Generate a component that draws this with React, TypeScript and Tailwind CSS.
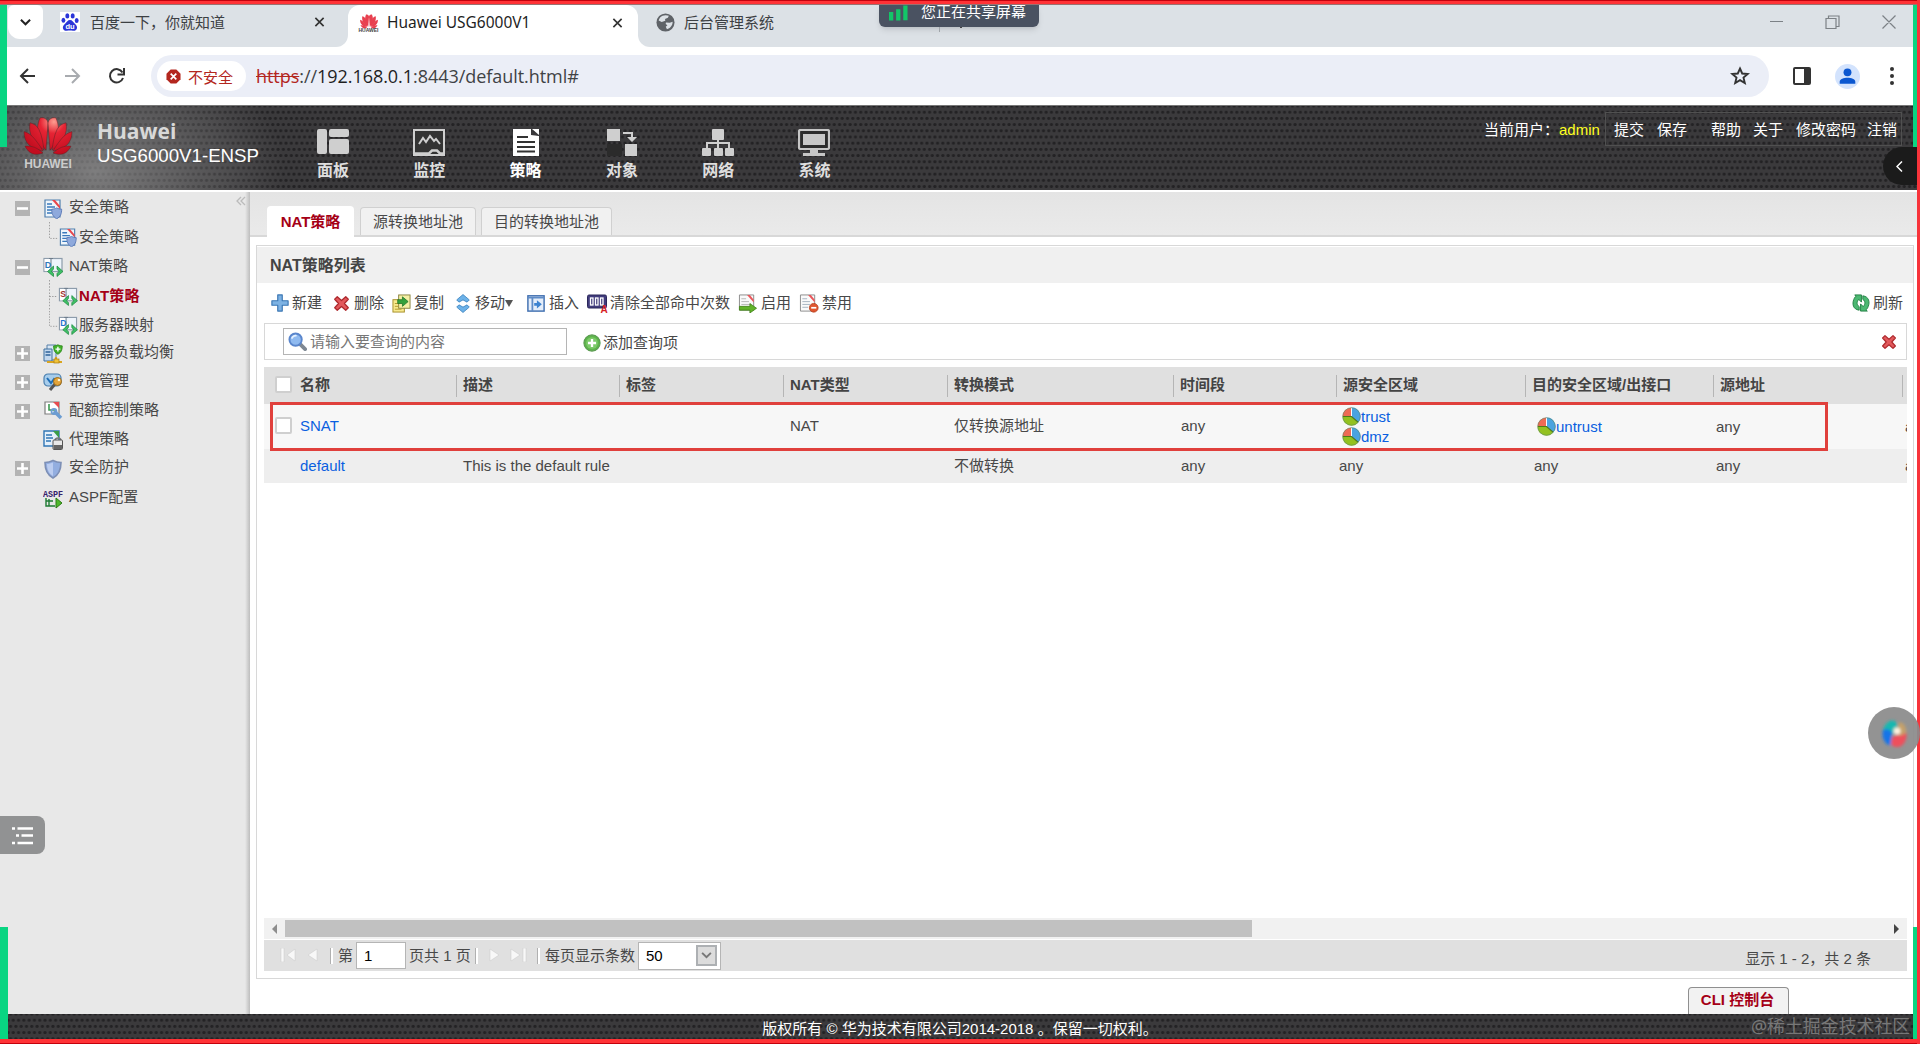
import React from "react";

type IconProps = { className?: string };

/* ---------- logos ---------- */

function Petals() {
  return (
    <>
      <path d="M24 37C18 30 12 18 18 4c5-1 8 2 8 6z" transform="translate(-1 0)" />
      <path d="M26 37c6-7 12-19 6-33-5-1-8 2-8 6z" transform="translate(1 0)" />
      <path d="M21 37C10 30 5 20 7 9c4 1 7 3 9 7 3 6 4 14 5 21z" />
      <path d="M29 37c11-7 16-17 14-28-4 1-7 3-9 7-3 6-4 14-5 21z" />
      <path d="M20 38C8 36 1 30 1 18c4 1 8 4 11 8 3 4 6 8 8 12z" />
      <path d="M30 38c12-2 19-8 19-20-4 1-8 4-11 8-3 4-6 8-8 12z" />
      <path d="M20 40C12 43 6 41 2 33c7-1 13 2 18 7z" />
      <path d="M30 40c8 3 14 1 18-7-7-1-13 2-18 7z" />
    </>
  );
}

function HuaweiLogo({ className }: IconProps) {
  return (
    <svg viewBox="0 0 50 43" className={className} preserveAspectRatio="none">
      <defs>
        <radialGradient id="petal" gradientUnits="userSpaceOnUse" cx="30" cy="8" r="34">
          <stop offset="0" stopColor="#ff9d90" />
          <stop offset="0.35" stopColor="#e62434" />
          <stop offset="1" stopColor="#c20d1f" />
        </radialGradient>
      </defs>
      <g fill="url(#petal)" stroke="#5a2024" strokeWidth="0.5"><Petals /></g>
    </svg>
  );
}

function HuaweiFavicon() {
  return (
    <div className="flex w-[21px] shrink-0 flex-col items-center">
      <svg viewBox="0 0 50 43" className="h-[16px] w-[20px]" fill="#e8404f"><Petals /></svg>
      <span className="-mt-px font-['Liberation_Sans'] text-[5px] leading-[5px] font-bold text-[#444]">HUAWEI</span>
    </div>
  );
}

function BaiduIcon() {
  return (
    <svg viewBox="0 0 20 20" className="h-5 w-5 shrink-0 bg-white">
      <g fill="#2b35d8">
        <ellipse cx="7.3" cy="3.9" rx="2" ry="2.7" />
        <ellipse cx="12.7" cy="3.9" rx="2" ry="2.7" />
        <ellipse cx="3.4" cy="8.2" rx="1.9" ry="2.5" />
        <ellipse cx="16.7" cy="8.4" rx="1.9" ry="2.5" />
        <path d="M10 8c2.4 0 3 2 4.600 3.600 2 1.800 2.800 3 2.300 5-.6 2.200-2.400 2.400-4 2.200-2-.3-4-.3-6 0-1.600.2-3.400-.2-3.900-2.200-.5-2 .4-3.200 2.300-5C7 10 7.600 8 10 8z" />
      </g>
      <text x="10" y="17" textAnchor="middle" fontSize="7.500" fontWeight="700" fill="#fff" fontFamily="Liberation Sans">du</text>
    </svg>
  );
}

function Globe() {
  return (
    <svg viewBox="0 0 20 20" className="h-[19px] w-[19px] shrink-0">
      <circle cx="10" cy="10" r="9.500" fill="#5f6368" />
      <path d="M7 2.800c2-.8 5-.7 6.500.2l-1 2-3 1.200.3 2L6 9.500 2.800 8C3.300 5.500 5 3.600 7 2.800zM10.500 10l4 .2 3-1c0 4-2.500 7-6 7.900l-1.200-2.500 1.700-1.800-1.800-1.300z" fill="#dce1e6" />
    </svg>
  );
}

/* ---------- main navigation icons ---------- */

const NAV_ICONS: Record<string, React.ReactNode> = {
  面板: (
    <g fill="#cfcfcf">
      <rect x="0" y="0" width="10" height="25" rx="2" />
      <rect x="12" y="0" width="20" height="8" rx="2" />
      <rect x="12" y="10" width="20" height="15" rx="2" />
    </g>
  ),
  监控: (
    <g fill="none" stroke="#cfcfcf">
      <rect x="1" y="1" width="30" height="25" fill="#333" strokeWidth="2" />
      <path d="M6 15l4-6 3 4 4-6 4 5 2-2 4 5" strokeWidth="2" />
      <path d="M1 24.500h15l3-3h5l3 3h5" strokeWidth="2.500" />
    </g>
  ),
  策略: (
    <g>
      <path d="M3 0h18v6l8 1v20H3z" fill="#fff" />
      <path d="M22 0h7v6z" fill="#fff" />
      <path d="M7 8h11M7 13h18M7 18h18M7 22.500h18" stroke="#333" strokeWidth="1.800" />
    </g>
  ),
  对象: (
    <g fill="#cfcfcf">
      <rect x="1" y="0" width="13" height="12" />
      <rect x="19" y="15" width="12" height="12" />
      <path d="M17 3h10v5h4l-5 5-5-5h4V5h-8z" />
      <rect x="1" y="15" width="15" height="12" fill="#2b2b2b" />
    </g>
  ),
  网络: (
    <g fill="#cfcfcf">
      <rect x="10" y="0" width="12" height="11" rx="1" />
      <rect x="0" y="19" width="9" height="8" rx="1" />
      <rect x="12" y="19" width="9" height="8" rx="1" />
      <rect x="23" y="19" width="9" height="8" rx="1" />
      <path d="M16 10v9M5 20v-6h22v6" fill="none" stroke="#cfcfcf" strokeWidth="2" />
    </g>
  ),
  系统: (
    <g fill="#c6c6c6">
      <rect x="1" y="1" width="30" height="19" rx="1.500" fill="#2b2b2b" stroke="#c6c6c6" strokeWidth="2.200" />
      <rect x="5" y="5" width="22" height="11" />
      <path d="M12 21h8v3h7v3H5v-3h7z" />
    </g>
  ),
};

/* ---------- small coloured icons ---------- */

function Ico({ children, className = "h-[19px] w-[19px]" }: { children: React.ReactNode; className?: string }) {
  return <svg viewBox="0 0 20 20" className={`shrink-0 ${className}`}>{children}</svg>;
}

const shieldPath = "M10 1.500c3 1.500 5.500 2 8 2 0 7-1.500 12-8 15.500C3.500 15.500 2 10.500 2 3.500c2.500 0 5-.5 8-2z";

const policyArt = (
  <>
    <path d="M2 1h15v17H2z" fill="#eef5fb" stroke="#4f7fae" strokeWidth="1.200" />
    <path d="M9 1h3l5 6v3z" fill="#e8464b" />
    <path d="M4 5h5M4 8h8M4 11h6M4 14h5" stroke="#3a79bd" strokeWidth="1.400" />
    <g transform="translate(7.500 8) scale(.62)"><path d={shieldPath} fill="#8ea9dc" stroke="#5a77b5" strokeWidth="1.500" /></g>
  </>
);

const natArt = (letter: string, color: string) => (
  <>
    <rect x="1" y="1.500" width="18" height="13" fill="#eef4fb" stroke="#8d9cab" strokeWidth="1.200" />
    <rect x="1.600" y="2.100" width="5.500" height="12" fill="#fff" />
    <path d="M8 1v14M6 1.500h4" stroke="#6d7c8b" />
    <text x="1.800" y="10.500" fontSize="9" fontWeight="700" fill={color} fontFamily="Liberation Sans">{letter}</text>
    <path d="M10.500 9L4.500 14.500l6 5V16.500L8.500 14.500l2-2.500zM14 9l6 5.500-6 5V16.500l2-2-2-2.500z" fill="#3fbf66" stroke="#16873a" strokeWidth=".7" />
  </>
);

const ART: Record<string, React.ReactNode> = {
  policy: policyArt,
  nat: natArt("D", "#2d77b8"),
  snat: natArt("S", "#a03030"),
  dnat: natArt("D", "#1f73d0"),
  slb: (
    <>
      <path d="M4 1h9v15H4z" fill="#d8e6f4" stroke="#5880a8" />
      <path d="M1 5h8v12H1z" fill="#c3d8ee" stroke="#40709f" />
      <path d="M2.500 8h5M2.500 11h5" stroke="#2f6299" strokeWidth="1.300" />
      <g transform="translate(9.500 0) scale(.54)"><path d={shieldPath} fill="#43b32c" stroke="#2a8518" strokeWidth="1.500" /><path d="M10 5v9M5.500 9.500h9" stroke="#fff" strokeWidth="2.500" /></g>
      <path d="M4 18h15M13 13v5" stroke="#d9a520" strokeWidth="2.200" />
      <rect x="11" y="15" width="5" height="4" fill="#f0c238" stroke="#a97d10" strokeWidth=".7" />
    </>
  ),
  bandwidth: (
    <>
      <rect x="1" y="2" width="17" height="12" rx="4" fill="#a7cdec" stroke="#4b7fae" strokeWidth="1.200" />
      <path d="M4 6l4 5 3-4 3 3" stroke="#1e6db5" strokeWidth="2" fill="none" />
      <path d="M7 18l5-6" stroke="#555" strokeWidth="3" />
      <circle cx="14.500" cy="9.500" r="4" fill="#e3a43a" stroke="#9b6916" />
      <circle cx="16" cy="8" r="1.300" fill="#fff4d0" />
    </>
  ),
  quota: (
    <>
      <path d="M2 1h14v12H2z" fill="#fff" stroke="#7e7e7e" strokeWidth="1.200" />
      <path d="M10 1h6v6z" fill="#e84c51" />
      <path d="M6 3v6h6" stroke="#3c9a50" strokeWidth="1.600" fill="none" />
      <path d="M11 10l7 7" stroke="#6c9dd2" strokeWidth="3.500" />
      <circle cx="11" cy="10.500" r="2.500" fill="none" stroke="#6c9dd2" strokeWidth="1.800" />
    </>
  ),
  proxy: (
    <>
      <path d="M1 1h15v15H1z" fill="#e4f0fb" stroke="#2f75b5" strokeWidth="1.400" />
      <path d="M10 1h6v7z" fill="#3a9d48" />
      <path d="M3 5h6M3 8h7M3 11h5" stroke="#2f75b5" strokeWidth="1.500" />
      <path d="M12 11a3 3 0 016 0" stroke="#777" strokeWidth="1.500" fill="none" />
      <rect x="10" y="10" width="9.500" height="9.500" rx="1" fill="#e8e8e8" stroke="#555" />
      <rect x="10.500" y="15" width="8.500" height="4" fill="#666" />
    </>
  ),
  shield: (
    <>
      <path d={shieldPath} fill="#93aee0" stroke="#7d8fb5" strokeWidth="1.600" />
      <path d="M10 3.500v13.500c-4-2.500-6-6-6-12 2 0 4-.6 6-1.500z" fill="#bccdf0" />
    </>
  ),
  aspf: (
    <>
      <text x="0" y="7.500" textLength="20" lengthAdjust="spacingAndGlyphs" fontSize="9.500" fontWeight="700" fill="#35206b" fontFamily="Liberation Mono">ASPF</text>
      <path d="M3 9v8h9M3 12h7M6 10v7" stroke="#1d7a32" strokeWidth="1.400" fill="none" />
      <path d="M13 9l6 5-6 5z" fill="#4fb82c" stroke="#2c7a14" />
    </>
  ),
  add: <path d="M7.500 1h5v6.500H19v5h-6.500V19h-5v-6.500H1v-5h6.500z" fill="#7db2e3" stroke="#3b77b4" strokeWidth="1.300" strokeLinejoin="round" />,
  del: <path d="M2 5l3-3 5 4.500L15 2l3 3-4.500 5 4.500 5-3 3-5-4.500L5 18l-3-3 4.500-5z" fill="#e2595c" stroke="#ae2a2e" strokeWidth="1.500" strokeLinejoin="round" />,
  copy: (
    <>
      <rect x="1" y="6" width="12" height="13" fill="#f7e98e" stroke="#a58d27" />
      <rect x="7" y="1" width="12" height="14" fill="#f5f0a5" stroke="#8a8440" />
      <path d="M3 10h4M3 13h4M3 16h7" stroke="#b39a2e" />
      <path d="M6 6h5V3l6 5-6 5v-3H6z" fill="#35a13c" stroke="#1e7326" strokeWidth=".8" />
    </>
  ),
  move: (
    <g fill="#6db2e8" stroke="#2d78b8" strokeWidth=".8">
      <path d="M10 0l7 6-2.500 2.500L10 6 5.500 8.500 3 6z" />
      <path d="M10 20l7-6-2.500-2.500L10 14l-4.500-2.500L3 14z" />
    </g>
  ),
  insert: (
    <>
      <rect x="1" y="2" width="18" height="17" fill="#e5eefa" stroke="#406fb0" strokeWidth="1.600" />
      <path d="M1 4h18M6 4v15" stroke="#5f8cc7" strokeWidth="2" />
      <path d="M8 10h3V7l5.500 4.500L11 16v-3H8z" fill="#3d83d0" />
    </>
  ),
  clear: (
    <>
      <rect x="0" y="2" width="19" height="13" rx="1.500" fill="#413c7c" stroke="#2b275a" />
      <g fill="none" stroke="#fff" strokeWidth="1.300"><rect x="3" y="5" width="2.500" height="7" /><rect x="8" y="5" width="2.500" height="7" /><rect x="13" y="5" width="2.500" height="7" /></g>
      <text x="13" y="20" fontSize="10" fontWeight="700" fill="#d61f26" fontFamily="Liberation Sans">A</text>
    </>
  ),
  enable: (
    <>
      <path d="M1 1h15v16H1z" fill="#fafafa" stroke="#8a8a8a" />
      <path d="M9 1h3l4 5v3z" fill="#e9565a" />
      <path d="M3 5h5M3 8h8M3 11h10" stroke="#b5b5b5" />
      <path d="M1 13h11v-3l7 5-7 5v-3H1z" fill="#62b32a" stroke="#3b7d12" strokeWidth=".8" />
    </>
  ),
  disable: (
    <>
      <path d="M1 1h15v17H1z" fill="#fafafa" stroke="#8a8a8a" />
      <path d="M9 1h3l4 5v3z" fill="#e9565a" />
      <path d="M3 5h5M3 8h8M3 11h8M3 14h6" stroke="#a5b2c0" />
      <circle cx="15" cy="14.500" r="4.600" fill="#e0562f" stroke="#b23a18" strokeWidth=".8" />
      <path d="M12.300 14.500h5.400" stroke="#fff" strokeWidth="1.800" />
    </>
  ),
  refresh: (
    <g fill="#4cb872" stroke="#1d7d40" strokeWidth="1">
      <path d="M8 18C1 17 0 11 2 6c.8-2 1.500-3 2.500-3.500L3 1h7.500v8L7.500 6C5 9 5 12 8 14z" />
      <path d="M12 2c7 1 8 7 6 12-.8 2-1.500 3-2.500 3.500L17 19H9.500v-8l3 3C15 11 15 8 12 6z" />
    </g>
  ),
  search: (
    <>
      <path d="M12.500 12.500l5.500 5.500" stroke="#7e8893" strokeWidth="4" strokeLinecap="round" />
      <circle cx="8" cy="8" r="6.500" fill="#8fbaf0" stroke="#5a86cc" strokeWidth="2" />
      <path d="M4 7a4 4 0 015-3" stroke="#e5f1ff" strokeWidth="2" fill="none" />
    </>
  ),
  plusCircle: (
    <>
      <circle cx="10" cy="10" r="9" fill="#5eb54b" stroke="#5a9a50" strokeWidth="1.200" />
      <circle cx="10" cy="10" r="6.500" fill="#7dca6a" />
      <path d="M10 5.500v9M5.500 10h9" stroke="#fff" strokeWidth="2.600" />
    </>
  ),
  zone: (
    <>
      <path d="M10 10V.5A9.500 9.500 0 00.5 10z" fill="#ee6a55" />
      <path d="M10 10V.5A9.500 9.500 0 0117 16.500z" fill="#4ba3df" />
      <path d="M10 10H.5A9.500 9.500 0 0017 16.500z" fill="#93c11f" />
      <path d="M10 1v9" stroke="#fff" strokeWidth="1" fill="none" />
      <path d="M1 10h9l7 6" stroke="#4d7a18" strokeWidth="1.200" fill="none" />
      <circle cx="10" cy="10" r="9.200" fill="none" stroke="#5c8a6a" strokeOpacity=".6" />
    </>
  ),
};

/* ---------- browser chrome ---------- */

function Cross({ className = "" }: IconProps) {
  return (
    <svg viewBox="0 0 12 12" className={`h-[12px] w-[11px] shrink-0 ${className}`}>
      <path d="M1.500 1.500l9 9M10.500 1.500l-9 9" stroke="#333" strokeWidth="1.800" />
    </svg>
  );
}

function TabStrip() {
  return (
    <div className="flex h-[42px] shrink-0 bg-[#dce1e6] pl-2 text-[15px] text-[#3c4043]">
      <div className="flex h-[34px] w-[35px] shrink-0 items-center justify-center rounded-b-xl rounded-t-md bg-white">
        <svg viewBox="0 0 12 8" className="h-[8px] w-[11px]"><path d="M1 1.500l5 5 5-5" fill="none" stroke="#222" strokeWidth="2.200" /></svg>
      </div>
      <div className="flex h-full w-[305px] shrink-0 bg-white">
        <div className="flex h-full w-full items-center rounded-br-xl bg-[#dce1e6] pb-[8px] pl-[17px]">
          <BaiduIcon />
          <span className="ml-[10px] w-[224px]">百度一下，你就知道</span>
          <Cross />
        </div>
      </div>
      <div className="flex h-full w-[290px] shrink-0 items-center bg-[#dce1e6]">
        <div className="flex h-full w-full items-center rounded-t-xl bg-white pb-[7px] pl-[10px] text-[#1f1f1f]">
          <HuaweiFavicon />
          <span className="ml-[8px] w-[225px] text-[15.500px]">Huawei USG6000V1</span>
          <Cross />
        </div>
      </div>
      <div className="flex h-full w-[1282px] shrink-0 bg-white">
        <div className="flex h-full w-full items-center rounded-bl-xl bg-[#dce1e6] pb-[8px] pl-[18px]">
          <Globe />
          <span className="ml-[9px]">后台管理系统</span>
          <svg viewBox="0 0 130 14" className="mr-[22px] ml-auto h-[14px] w-[130px]" fill="none" stroke="#7c8186" strokeWidth="1.200">
            <path d="M2 6.500h13M58 3.500h10v10H58zM60.500 3V1H71v10.500h-2.500M114.500.5l13 13M127.500.5l-13 13" />
          </svg>
        </div>
      </div>
    </div>
  );
}

function AddressBar() {
  return (
    <div className="flex h-[58px] shrink-0 items-center bg-white">
      <svg viewBox="0 0 110 20" className="ml-[18px] h-[20px] w-[110px] shrink-0" fill="none" strokeWidth="2">
        <path d="M17 10H3M10 3l-7 7 7 7" stroke="#333" />
        <path d="M47 10h14M54 3l7 7-7 7" stroke="#a8abaf" />
        <path d="M104.500 6.500A6.700 6.700 0 10105 12" stroke="#333" />
        <path d="M106 2v6.500h-6.500" stroke="#333" />
      </svg>
      <div className="ml-[23px] flex h-[42px] w-[1618px] shrink-0 items-center rounded-full bg-[#ebeef7] pl-[6px]">
        <div className="flex h-[30px] w-[89px] shrink-0 items-center rounded-full bg-white pl-[9px]">
          <svg viewBox="0 0 16 16" className="h-[15px] w-[15px]"><path d="M5 .5h6L15.500 5v6L11 15.500H5L.5 11V5z" fill="#b3261e" /><path d="M5 5l6 6M11 5l-6 6" stroke="#fff" strokeWidth="1.800" /></svg>
          <span className="mt-[2px] ml-[7px] text-[15px] text-[#b3261e]">不安全</span>
        </div>
        <div className="ml-[10px] w-[1474px] shrink-0 font-['Open_Sans','Noto_Sans_CJK_SC',sans-serif] text-[18px] tracking-[-0.050px] whitespace-nowrap text-[#3f4245]">
          <span className="text-[#b3261e] line-through">https</span>://<span className="text-[#1f1f1f]">192.168.0.1</span>:8443/default.html#
        </div>
        <svg viewBox="0 0 20 20" className="h-[20px] w-[20px] shrink-0"><path d="M10 2.500l2.200 5 5.500.5-4.200 3.600 1.300 5.400-4.800-2.900L5.200 17l1.300-5.400L2.300 8l5.500-.5z" fill="none" stroke="#333" strokeWidth="1.900" /></svg>
      </div>
      <svg viewBox="0 0 18 18" className="ml-[24px] h-[18px] w-[18px] shrink-0"><rect x="1" y="1" width="16" height="16" rx="1" fill="none" stroke="#333" strokeWidth="2" /><path d="M11 1h6v16h-6z" fill="#333" /></svg>
      <svg viewBox="0 0 24 24" className="ml-[24px] h-[25px] w-[25px] shrink-0"><circle cx="12" cy="12" r="12" fill="#d3e3fd" /><circle cx="12" cy="8" r="3.800" fill="#0b57d0" /><path d="M4.500 19v-2c0-2.500 4-3.800 7.500-3.800s7.500 1.300 7.500 3.800v2z" fill="#0b57d0" /></svg>
      <svg viewBox="0 0 6 20" className="ml-[29px] h-[20px] w-[6px] shrink-0" fill="#333"><circle cx="3" cy="3" r="2" /><circle cx="3" cy="10" r="2" /><circle cx="3" cy="17" r="2" /></svg>
    </div>
  );
}

/* ---------- product header ---------- */

const MESH =
  "bg-[#3b3a3c] [background-image:radial-gradient(circle,#232224_1.2px,transparent_1.900px),radial-gradient(circle,#232224_1.2px,transparent_1.900px)] [background-size:5.300px_12.400px] [background-position:0_0,2.650px_6.200px]";

function AppHeader() {
  return (
    <header className={`h-[85px] shrink-0 border-t border-[#777] font-['Liberation_Sans','Noto_Sans_CJK_SC',sans-serif] ${MESH}`}>
      <div className="flex h-full bg-[radial-gradient(ellipse_190px_130px_at_95px_65px,rgba(170,170,170,0.6),transparent)]">
        <div className="ml-[22px] flex w-[52px] flex-col items-center pt-[8px]">
          <HuaweiLogo className="h-[42px] w-[50px]" />
          <span className="mt-[2px] text-[12px] leading-[12px] font-bold tracking-[-0.1px] text-[#ccc]">HUAWEI</span>
        </div>
        <div className="ml-[23px] w-[220px] pt-[13px] whitespace-nowrap">
          <div className="font-['Open_Sans',sans-serif] text-[21px] leading-[24px] font-bold text-[#d8d8d8]">Huawei</div>
          <div className="mt-px text-[18.700px] leading-[24px] text-white">USG6000V1-ENSP</div>
        </div>
        <nav className="flex gap-[64.300px]">
          {Object.entries(NAV_ICONS).map(([label, art]) => (
            <div key={label} className="flex w-[32px] flex-col items-center pt-[23px]">
              <svg viewBox="0 0 32 27" className="h-[27px] w-[32px] shrink-0">{art}</svg>
              <span className={`mt-[5px] text-[16px] leading-[20px] font-bold whitespace-nowrap ${label === "策略" ? "text-white" : "text-[#dedede]"}`}>{label}</span>
            </div>
          ))}
        </nav>
        <div className="mt-[6px] ml-auto flex h-[34px] items-center text-[15px] whitespace-nowrap text-white">
          <span className="mt-[2px] w-[75px]">当前用户：</span>
          <span className="mt-[2px] w-[46px] text-[#ffff20]">admin</span>
          <div className="flex h-full items-center border border-[#505050] pt-[2px] pl-[8px]">
            <span className="w-[43px]">提交</span>
            <span className="w-[54px]">保存</span>
            <span className="w-[42px]">帮助</span>
            <span className="w-[43px]">关于</span>
            <span className="w-[71px]">修改密码</span>
            <span className="w-[34px]">注销</span>
          </div>
          <div className="w-[18px]" />
        </div>
      </div>
    </header>
  );
}

/* ---------- navigation tree ---------- */

type Node = { label: string; icon: string; h: string; toggle?: "+" | "-"; child?: "mid" | "last"; active?: boolean };

const TREE: Node[] = [
  { label: "安全策略", icon: "policy", h: "h-[30px]", toggle: "-" },
  { label: "安全策略", icon: "policy", h: "h-[29px]", child: "last" },
  { label: "NAT策略", icon: "nat", h: "h-[29px]", toggle: "-" },
  { label: "NAT策略", icon: "snat", h: "h-[31px]", child: "mid", active: true },
  { label: "服务器映射", icon: "dnat", h: "h-[27px]", child: "last" },
  { label: "服务器负载均衡", icon: "slb", h: "h-[28px]", toggle: "+" },
  { label: "带宽管理", icon: "bandwidth", h: "h-[29px]", toggle: "+" },
  { label: "配额控制策略", icon: "quota", h: "h-[29px]", toggle: "+" },
  { label: "代理策略", icon: "proxy", h: "h-[29px]" },
  { label: "安全防护", icon: "shield", h: "h-[28px]", toggle: "+" },
  { label: "ASPF配置", icon: "aspf", h: "h-[32px]" },
];

function Sidebar() {
  return (
    <aside className="flex w-[250px] shrink-0 bg-[#e8e8e8]">
      <div className="w-[230px]">
        {TREE.map((n, i) => (
          <div key={i} className={`flex items-center ${n.h}`}>
            <div className="flex w-[43px] shrink-0 pl-[15px]">
              {n.toggle && (
                <div className="mt-[3px] flex h-[15px] w-[15px] items-center justify-center bg-[#b3b3b3]">
                  <svg viewBox="0 0 11 11" className="h-[11px] w-[11px]"><path d={n.toggle === "+" ? "M0 5.500h11M5.500 0v11" : "M0 5.500h11"} stroke="#fff" strokeWidth="2.600" /></svg>
                </div>
              )}
            </div>
            {n.child && (
              <div className="flex w-[15px] shrink-0 self-stretch pl-[6px]">
                <svg viewBox="0 0 10 30" preserveAspectRatio="none" className="h-full w-[9px]"><path d={n.child === "mid" ? "M.5 0v30M.5 16h9" : "M.5 0v17h9"} fill="none" stroke="#999" strokeDasharray="1.500 1.500" /></svg>
              </div>
            )}
            <Ico className={n.child ? "mt-[2px] h-[19px] w-[20px]" : "mt-[3px] h-[20px] w-[20px]"}>{ART[n.icon]}</Ico>
            <span className={`${n.child ? "ml-px" : "ml-[6px]"} leading-[20px] whitespace-nowrap ${n.active ? "font-bold tracking-[0.2px] text-[#a50016]" : ""}`}>{n.label}</span>
          </div>
        ))}
      </div>
      <div className="w-[10px] pt-[4px]">
        <svg viewBox="0 0 10 10" className="ml-[6px] h-[10px] w-[10px] max-w-none" fill="none" stroke="#bbb" strokeWidth="1.300"><path d="M5 1L1 5l4 4M9 1L5 5l4 4" /></svg>
      </div>
      <div className="w-[10px] bg-linear-to-r from-[#bdbdbd]/0 from-50% to-[#bdbdbd]" />
    </aside>
  );
}

/* ---------- content ---------- */

const TOOLS = [
  { label: "新建", icon: "add", box: "w-[62px]", art: "mr-[3px] w-[18px] h-[18px]" },
  { label: "删除", icon: "del", box: "w-[59px]", art: "mr-[4px] w-[17px] h-[17px]" },
  { label: "复制", icon: "copy", box: "w-[62px]", art: "mr-[3px] w-[19px] h-[19px]" },
  { label: "移动", icon: "move", box: "w-[73px]", art: "mr-[3px] w-[18px] h-[19px]", caret: true },
  { label: "插入", icon: "insert", box: "w-[60px]", art: "mr-[4px] w-[18px] h-[18px]" },
  { label: "清除全部命中次数", icon: "clear", box: "w-[151px]", art: "mr-[2px] w-[21px] h-[20px]" },
  { label: "启用", icon: "enable", box: "w-[61px]", art: "mr-[3px] w-[20px] h-[19px]" },
  { label: "禁用", icon: "disable", box: "w-[60px]", art: "mr-[3px] w-[20px] h-[19px]" },
];

const COLS = "grid grid-cols-[30px_163px_163px_164px_164px_226px_163px_189px_188px_189px_4px] overflow-hidden";
const HEADS = ["名称", "描述", "标签", "NAT类型", "转换模式", "时间段", "源安全区域", "目的安全区域/出接口", "源地址"];

function Box() {
  return <div className="h-[17px] w-[17px] rounded-[2px] border-2 border-[#cfcfcf] bg-white" />;
}

function Zone({ name }: { name: string }) {
  return (
    <div className="flex h-[20px] items-center text-[#0a5fe0]">
      <Ico className="h-[19px] w-[19px]">{ART.zone}</Ico>
      <span>{name}</span>
    </div>
  );
}

function Table() {
  return (
    <div className="relative">
      <div className={`${COLS} h-[37px] items-center bg-[#e0e0e0] font-bold text-[#444]`}>
        <div className="-mt-[3px] pl-[11px]"><Box /></div>
        {HEADS.map((h) => (
          <div key={h} className="flex h-[22px] items-center border-r border-[#b5b5b5] pb-[2px] pl-[6px] whitespace-nowrap">
            {h}
          </div>
        ))}
      </div>
      <div className={`${COLS} h-[45px] items-center bg-[#f7f7f7]`}>
        <div className="-mt-[3px] pl-[11px]"><Box /></div>
        <div className="-mt-[2px] pl-[6px] text-[#0a5fe0]">SNAT</div>
        <div />
        <div />
        <div className="-mt-[2px] pl-[6px]">NAT</div>
        <div className="-mt-[2px] pl-[6px]">仅转换源地址</div>
        <div className="-mt-[2px] pl-[7px]">any</div>
        <div className="pl-[5px]"><Zone name="trust" /><Zone name="dmz" /></div>
        <div className="pl-[11px]"><Zone name="untrust" /></div>
        <div className="pl-[2px]">any</div>
        <div className="pl-[2px]">a</div>
      </div>
      <div className={`${COLS} h-[34px] items-center bg-[#eee]`}>
        <div />
        <div className="pl-[6px] text-[#0a5fe0]">default</div>
        <div className="pl-[6px] whitespace-nowrap">This is the default rule</div>
        <div />
        <div />
        <div className="pl-[6px]">不做转换</div>
        <div className="pl-[7px]">any</div>
        <div className="pl-[2px]">any</div>
        <div className="pl-[8px]">any</div>
        <div className="pl-[2px]">any</div>
        <div className="pl-[2px]">a</div>
      </div>
      <div className="absolute top-[35px] left-[6px] h-[49px] w-[1558px] border-3 border-[#e0403c]" />
    </div>
  );
}

function Divider() {
  return <div className="h-[16px] w-[3px] shrink-0 border-r-2 border-l border-r-white border-l-[#b0b0b0]" />;
}

function Pager() {
  return (
    <div className="flex h-[31px] items-center bg-[#e0e0e0] whitespace-nowrap">
      <svg viewBox="0 0 38 14" className="mr-[12px] ml-[16px] h-[16px] w-[38px] shrink-0 pb-[2px]" fill="#f8f8f8" stroke="#c8c8c8" strokeWidth=".5"><path d="M1 0h3v14H1zM15 1v12L7 7zM37 1v12L28 7z" /></svg>
      <Divider />
      <span className="ml-[5px] w-[18px]">第</span>
      <div className="flex h-[27px] w-[50px] items-center border border-[#b5b5b5] bg-white pl-[7px] text-black">1</div>
      <span className="ml-[3px] w-[66px]">页共 1 页</span>
      <Divider />
      <svg viewBox="0 0 38 14" className="mr-[10px] ml-[11px] h-[16px] w-[38px] shrink-0 pb-[2px]" fill="#f8f8f8" stroke="#c8c8c8" strokeWidth=".5"><path d="M1 1v12l9-6zM22 1v12l9-6zM34 0h3v14h-3z" /></svg>
      <Divider />
      <span className="ml-[5px] w-[93px]">每页显示条数</span>
      <div className="flex h-[28px] w-[83px] items-center border border-[#b5b5b5] bg-white pl-[7px] text-black">
        <span className="w-[50px]">50</span>
        <div className="flex h-[21px] w-[21px] items-center justify-center border-2 border-[#adb0b3] bg-[#dcdcdc]">
          <svg viewBox="0 0 12 8" className="h-[7px] w-[11px]"><path d="M1 1l5 5 5-5" fill="none" stroke="#777" strokeWidth="2.200" /></svg>
        </div>
      </div>
      <span className="mt-[7px] mr-[36px] ml-auto">显示 1 - 2，共 2 条</span>
    </div>
  );
}

function Content() {
  return (
    <main className="flex min-w-0 flex-1 flex-col bg-white">
      <div className="flex h-[45px] shrink-0 items-end border-b-2 border-[#d8d8d8] bg-linear-to-b from-[#e4e4e4] to-[#eaeaea] pl-[17px]">
        <div className="-mb-[2px] flex h-[31px] w-[87px] items-center justify-center rounded-t-sm bg-white font-bold text-[#a50016]">NAT策略</div>
        <div className="ml-[6px] flex h-[28px] w-[116px] items-center justify-center rounded-t-sm border border-b-0 border-[#d0d0d0] bg-[#f1f1f1]">源转换地址池</div>
        <div className="ml-[5px] flex h-[28px] w-[131px] items-center justify-center rounded-t-sm border border-b-0 border-[#d0d0d0] bg-[#f1f1f1]">目的转换地址池</div>
      </div>
      <section className="mt-[8px] ml-[6px] flex h-[734px] w-[1658px] shrink-0 flex-col border border-[#d8d8d8]">
        <h1 className="mt-px flex h-[36px] items-center bg-[#f0f0f0] pt-px pl-[13px] text-[16px] font-bold text-[#444]">NAT策略列表</h1>
        <div className="flex h-[40px] items-center pl-[14px] whitespace-nowrap">
          {TOOLS.map((t) => (
            <div key={t.label} className={`flex shrink-0 items-center ${t.box}`}>
              <Ico className={t.art}>{ART[t.icon]}</Ico>
              <span>{t.label}</span>
              {t.caret && <span className="h-0 w-0 border-x-4 border-t-[7px] border-x-transparent border-t-[#555]" />}
            </div>
          ))}
          <div className="mr-[10px] ml-auto flex items-center">
            <Ico className="mr-[3px] h-[18px] w-[18px]">{ART.refresh}</Ico>
            <span>刷新</span>
          </div>
        </div>
        <div className="ml-[7px] flex h-[37px] w-[1643px] items-center border border-[#d8d8d8] pl-[18px]">
          <div className="flex h-[27px] w-[284px] items-center border border-[#b5b5b5] pl-[4px] text-[#777]">
            <Ico className="mr-[3px] h-[19px] w-[19px]">{ART.search}</Ico>
            <span>请输入要查询的内容</span>
          </div>
          <Ico className="mt-[2px] mr-[2px] ml-[16px] h-[18px] w-[18px]">{ART.plusCircle}</Ico>
          <span className="mt-[2px]">添加查询项</span>
          <Ico className="mr-[9px] ml-auto h-[16px] w-[16px]">{ART.del}</Ico>
        </div>
        <div className="mt-[7px] ml-[7px] flex w-[1643px] flex-col">
          <Table />
        </div>
        <div className="mt-auto mb-px ml-[7px] flex h-[21px] w-[1643px] items-center bg-[#f1f1f1] pl-[8px]">
          <span className="h-0 w-0 border-y-5 border-r-[5px] border-y-transparent border-r-[#8d8d8d]" />
          <div className="ml-[8px] h-[17px] w-[967px] bg-[#c1c1c1]" />
          <span className="mr-[8px] ml-auto h-0 w-0 border-y-5 border-l-[5px] border-y-transparent border-l-[#444]" />
        </div>
        <div className="mb-[7px] ml-[7px] w-[1643px]">
          <Pager />
        </div>
      </section>
      <div className="mt-auto mr-[131px] flex h-[27px] w-[101px] shrink-0 items-center justify-center self-end rounded-t border border-b-0 border-[#8f8f8f] bg-[#f2f2f2] pr-[2px] pb-[2px] font-bold whitespace-nowrap text-[#a50016]">CLI 控制台</div>
    </main>
  );
}

/* ---------- floating layers ---------- */

function Overlays() {
  return (
    <>
      <div className="absolute top-[5px] left-[879px] flex h-[22px] w-[160px] items-start rounded-b-md bg-[#4a5261] pl-[10px] shadow-md">
        <svg viewBox="0 0 20 16" className="h-[16px] w-[19px]" fill="#13c668"><path d="M0 7h4.500v9H0zM7.500 4H12v12H7.500zM15 0h4.500v15.500H15z" /></svg>
        <span className="-mt-[5px] ml-[13px] text-[15px] leading-[22px] text-white">您正在共享屏幕</span>
      </div>
      <div className="absolute top-[27px] left-[939px] h-[5px] w-px bg-[#a0a5aa]" />
      <div className="absolute top-[27px] left-[960px] h-px w-[2px] bg-[#444]" />
      <div className="absolute top-[147px] left-[1883px] flex h-[38px] w-[34px] items-center rounded-l-full bg-[#1b1b1b] pl-[13px]">
        <svg viewBox="0 0 7 11" className="h-[11px] w-[7px]"><path d="M6 .5L1 5.500l5 5" fill="none" stroke="#fff" strokeWidth="1.500" /></svg>
      </div>
      <div className="absolute top-[816px] left-0 flex h-[38px] w-[45px] items-center rounded-r-lg bg-[#919293] pl-[12px]">
        <svg viewBox="0 0 21 19" className="h-[19px] w-[21px]" stroke="#fff" strokeWidth="2.600"><path d="M0 2.500h3M5.500 2.500H21M4 9.500h3M9.500 9.500H21M0 17h3M5.500 17H21" /></svg>
      </div>
      <div className="absolute top-[1014px] left-[1751px] text-[17.900px] leading-[24px] whitespace-nowrap text-[#8a8a8a]/80">@稀土掘金技术社区</div>
      <div className="absolute top-[5px] left-0 h-[142px] w-[7px] bg-[#09d582]" />
      <div className="absolute top-[927px] left-0 h-[112px] w-[8px] bg-[#09d582]" />
      <div className="absolute top-[5px] left-[1913px] h-[142px] w-[4px] bg-[#09d582]" />
      <div className="absolute top-[927px] left-[1913px] h-[112px] w-[4px] bg-[#09d582]" />
      <div className="absolute inset-x-0 top-0 h-[5px] border-t border-b border-t-[#c4000c] border-b-[#9a7070] bg-[#ff3236]" />
      <div className="absolute inset-x-0 bottom-0 h-[5px] border-b border-[#c4000c] bg-[#ff3236]" />
      <div className="absolute inset-y-0 right-0 w-[3px] bg-[#f8333a]" />
      <svg viewBox="0 0 52 52" className="absolute top-[707px] left-[1868px] h-[52px] w-[52px]">
        <defs><filter id="soft"><feGaussianBlur stdDeviation="1.600" /></filter></defs>
        <circle cx="26" cy="26" r="26" fill="#8b8b8b" fillOpacity=".93" />
        <g filter="url(#soft)">
          <path d="M22 14c7-2 8 4 7 10l-6 4-8-3c0-5 3-9 7-11z" fill="#16b8b0" />
          <path d="M15 23c4-2 8 0 9 3l-1 12c-6 1-10-8-8-15z" fill="#1474e8" />
          <path d="M24 30l8-3 6-3c2 8-2 16-9 16-4 0-6-2-6-4z" fill="#ee4f5c" />
          <path d="M31 15c5 1 8 5 7 11l-6 3-3-4z" fill="#c4a06a" />
          <circle cx="29" cy="24" r="3.500" fill="#fff3e0" />
        </g>
      </svg>
    </>
  );
}

export default function App() {
  return (
    <div className="relative flex h-[1044px] w-[1920px] flex-col overflow-hidden bg-white pt-[5px] font-['Noto_Sans','Noto_Sans_CJK_SC',sans-serif]">
      <TabStrip />
      <AddressBar />
      <AppHeader />
      <div className="flex h-[824px] shrink-0 border-t-2 border-white font-['Liberation_Sans','Noto_Sans_CJK_SC',sans-serif] text-[15px] leading-[18px] text-[#484848]">
        <Sidebar />
        <Content />
      </div>
      <footer className={`flex h-[30px] shrink-0 items-center justify-center font-['Liberation_Sans','Noto_Sans_CJK_SC',sans-serif] text-[15px] whitespace-nowrap text-white ${MESH}`}>
        <span className="mt-px">版权所有 © 华为技术有限公司2014-2018 。保留一切权利。</span>
      </footer>
      <Overlays />
    </div>
  );
}
